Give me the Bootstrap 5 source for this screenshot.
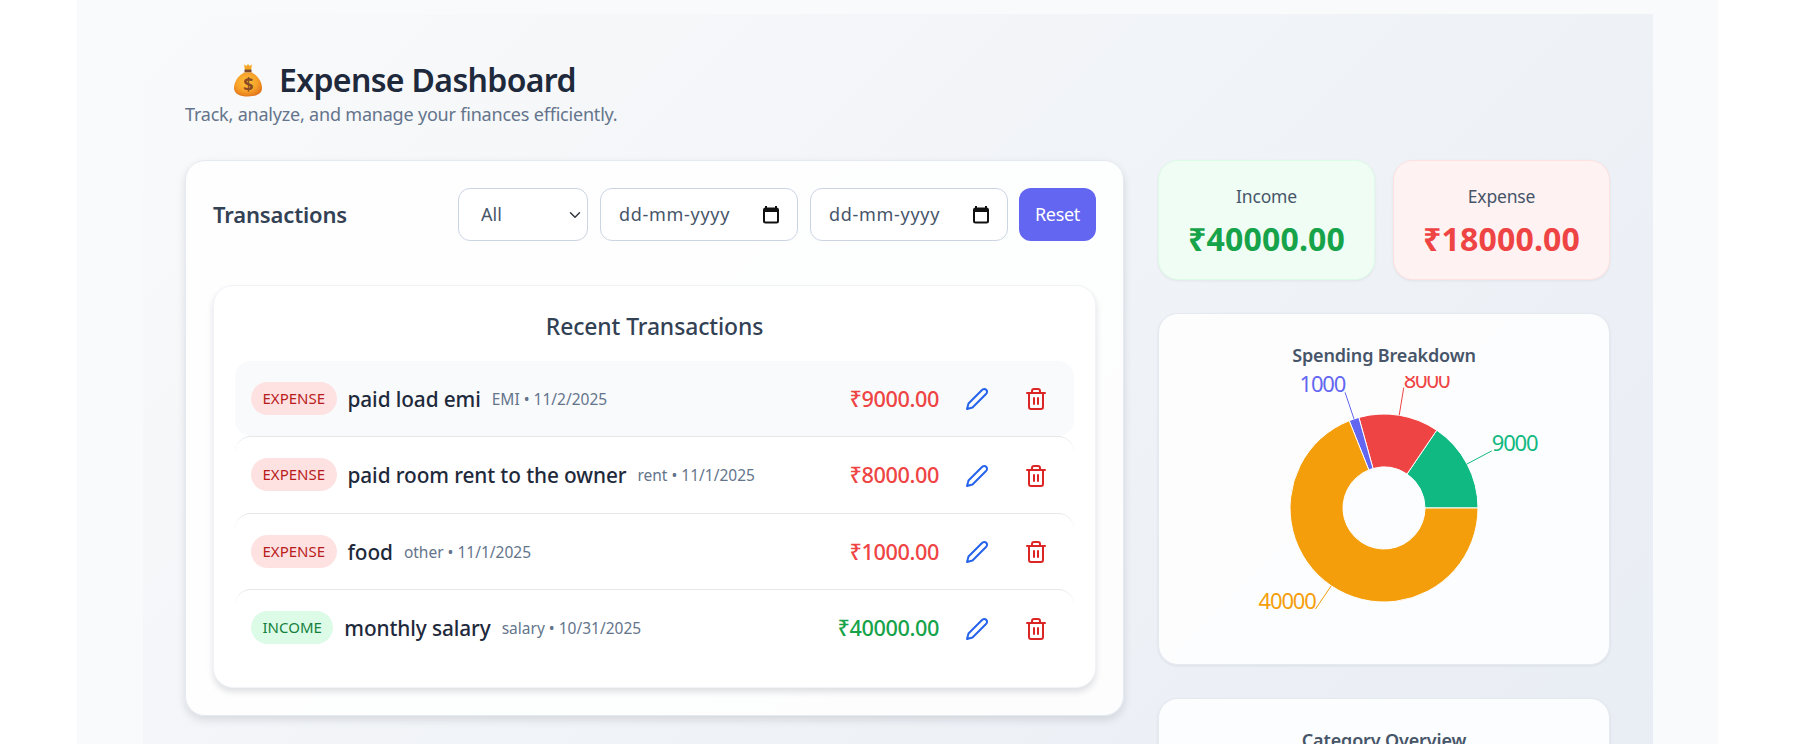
<!DOCTYPE html>
<html lang="en">
<head>
    <meta charset="UTF-8">
    <meta name="viewport" content="width=device-width, initial-scale=1.0">
    <title>Expense Dashboard</title>
    <link href="https://cdn.jsdelivr.net/npm/bootstrap@5.3.0/dist/css/bootstrap.min.css" rel="stylesheet">
    <style>
        html { overflow: hidden; }
        body {
            background-color: #ffffff;
            font-family: "Noto Sans", "Open Sans", sans-serif;
            color: #1e293b;
        }
        .page-outer {
            width: 1641px;
            margin: 0 0 0 77px;
            padding: 14px 65px 0 66px;
            background-color: #f9fafb;
        }
        .page-inner {
            padding: 43px 43px 40px 42px;
            background: linear-gradient(135deg, #f9fafb 0%, #e6ebf3 100%);
        }
        .dash-title {
            font-size: 32px;
            font-weight: 600;
            line-height: 45px;
            margin: 0 0 0 48px;
            letter-spacing: -0.65px;
            color: #1e293b;
        }
        .dash-sub {
            font-size: 18px;
            line-height: 24px;
            color: #64748b;
            margin: 0 0 34px 0;
            letter-spacing: -0.2px;
        }
        .bag-icon { width: 30px; height: 34px; }
        .dash-grid {
            display: grid;
            grid-template-columns: 939px 452px;
            gap: 34px;
            align-items: start;
        }
        .panel {
            background-color: rgba(255, 255, 255, 0.85);
            border: 1px solid #e5e9f0;
            border-radius: 20px;
        }
        .panel-main {
            padding: 27px;
            box-shadow: 0 4px 8px rgba(15, 23, 42, 0.12);
        }
        .panel-head { margin-bottom: 44px; height: 53px; }
        .panel-head h2 { font-size: 22px; font-weight: 600; color: #334155; margin: 0; letter-spacing: -0.15px; }
        .filter-wrap { gap: 12px; }
        .filter-select, .filter-date {
            height: 53px;
            margin: 0;
            background-color: #fff;
            border: 1px solid #cbd5e1;
            border-radius: 12px;
            font-size: 18px;
            color: #475569;
        }
        .filter-select {
            width: 130px;
            padding: 0 0 0 22px;
            background-position: right 4px center;
        }
        .filter-date {
            width: 198px;
            padding: 0 16px 0 18px;
        }
        .filter-date span { letter-spacing: .7px; }
        .reset-btn {
            width: 77px;
            height: 53px;
            margin-left: -1px;
            background-color: #6366f1;
            border: 0;
            border-radius: 12px;
            color: #fff;
            font-size: 18px;
            letter-spacing: -0.3px;
            padding: 0;
        }
        .list-box {
            background-color: #fff;
            border: 1px solid #f1f3f7;
            border-radius: 20px;
            padding: 27px 21px 21px;
            box-shadow: 0 4px 6px rgba(15, 23, 42, 0.13);
        }
        .list-box h3 {
            font-size: 22.9px;
            font-weight: 500;
            line-height: 28px;
            color: #334155;
            text-align: center;
            margin: 0 0 20px;
            letter-spacing: -0.1px;
        }
        .tx-row {
            height: 76.5px;
            padding: 0 14px 0 16px;
            border-top: 1px solid #e5e7eb;
            border-radius: 16px;
        }
        .tx-row:first-child { background-color: #f8fafc; border-top: 0; height: 75px; }
        .tx-pill {
            height: 33px;
            line-height: 33px;
            padding: 0 11.5px;
            border-radius: 17px;
            font-size: 15px;
        }
        .pill-exp { background-color: #fee2e2; color: #b91c1c; }
        .pill-inc { background-color: #dcfce7; color: #15803d; }
        .tx-name { font-size: 20.8px; font-weight: 500; color: #1e293b; letter-spacing: -0.1px; margin-left: 11px; padding-top: 2px; }
        .tx-meta { font-size: 15.5px; color: #64748b; margin-left: 11px; padding-top: 2px; }
        .tx-amount { font-size: 21.7px; font-weight: 500; letter-spacing: -0.4px; margin-right: 13.5px; padding-top: 2px; }
        .amt-exp { color: #ef4444; }
        .amt-inc { color: #16a34a; }
        .icon-btn {
            width: 48px;
            height: 44px;
            padding: 0;
            border: 0;
            background: transparent;
        }
        .icon-btn svg { width: 24px; height: 24px; fill: none; stroke-width: 2; stroke-linecap: round; stroke-linejoin: round; }
        .icon-edit svg { stroke: #2563eb; }
        .icon-del { margin-left: 11.5px; }
        .icon-del svg { stroke: #dc2626; }
        .side-col { display: flex; flex-direction: column; gap: 33px; }
        .stat-row { display: grid; grid-template-columns: 217px 217px; gap: 18px; }
        .stat-box {
            height: 120px;
            padding-top: 21px;
            text-align: center;
            border-radius: 20px;
            box-shadow: 0 1px 3px rgba(15, 23, 42, 0.06);
        }
        .stat-inc { background-color: #f0fdf4; border: 1px solid #dcfce7; }
        .stat-exp { background-color: #fef2f2; border: 1px solid #fee2e2; }
        .stat-label { font-size: 17.5px; line-height: 28px; color: #475569; letter-spacing: -0.2px; }
        .stat-value { font-size: 32px; line-height: 42px; font-weight: 700; margin-top: 8px; letter-spacing: 0.2px; }
        .chart-box {
            height: 352px;
            box-shadow: 0 1px 3px rgba(15, 23, 42, 0.08);
            padding-top: 27px;
        }
        .chart-box h4 {
            font-size: 18px;
            line-height: 28px;
            font-weight: 600;
            color: #475569;
            text-align: center;
            margin: 0;
            letter-spacing: -0.15px;
        }
        .donut { display: block; width: 450px; height: 280px; margin-top: 7px; overflow: hidden; }
        .donut text { font-size: 22px; font-weight: 400; letter-spacing: -1.2px; }
    </style>
</head>
<body>
    <div class="page-outer">
        <div class="page-inner">
            <h1 class="dash-title d-flex align-items-center gap-3">
                <svg class="bag-icon" viewBox="0 0 30 34" aria-hidden="true">
                    <defs>
                        <radialGradient id="bagFill" cx="45%" cy="40%" r="65%">
                            <stop offset="0" stop-color="#fdc43c"/>
                            <stop offset=".6" stop-color="#f7a028"/>
                            <stop offset="1" stop-color="#e0701a"/>
                        </radialGradient>
                    </defs>
                    <path d="M11 1.5l2.5 1.6L15 1l1.500 2.100L19 1.500 18 7h-6z" fill="#f5a623"/>
                    <path d="M11.500 6.500h7v3h-7z" fill="#7a4a2a"/>
                    <path d="M11 9.500C5 13 1 19 1 25c0 6 6 8.500 14 8.500S29 31 29 25c0-6-4-12-10-15.500z" fill="url(#bagFill)"/>
                    <text x="15" y="28" text-anchor="middle" font-size="18" font-weight="700" fill="#8a4a24">$</text>
                </svg>
                Expense Dashboard
            </h1>
            <p class="dash-sub">Track, analyze, and manage your finances efficiently.</p>

            <div class="dash-grid">
                <div class="panel panel-main">
                    <div class="panel-head d-flex justify-content-between align-items-center">
                        <h2>Transactions</h2>
                        <div class="d-flex filter-wrap">
                            <select class="form-select filter-select" aria-label="Type">
                                <option>All</option>
                                <option>Income</option>
                                <option>Expense</option>
                            </select>
                            <label class="filter-date d-flex align-items-center justify-content-between">
                                <span>dd-mm-yyyy</span>
                                <svg width="20" height="20" viewBox="0 0 20 20"><path d="M5 1v3M15 1v3" stroke="#111" stroke-width="2"/><rect x="3" y="3.500" width="14" height="14" rx="1.500" fill="none" stroke="#111" stroke-width="2"/><rect x="3" y="3.500" width="14" height="3.500" fill="#111"/></svg>
                            </label>
                            <label class="filter-date d-flex align-items-center justify-content-between">
                                <span>dd-mm-yyyy</span>
                                <svg width="20" height="20" viewBox="0 0 20 20"><path d="M5 1v3M15 1v3" stroke="#111" stroke-width="2"/><rect x="3" y="3.500" width="14" height="14" rx="1.500" fill="none" stroke="#111" stroke-width="2"/><rect x="3" y="3.500" width="14" height="3.500" fill="#111"/></svg>
                            </label>
                            <button class="btn reset-btn" type="button">Reset</button>
                        </div>
                    </div>

                    <div class="list-box">
                        <h3>Recent Transactions</h3>
                        <div id="txList"></div>
                    </div>
                </div>

                <div class="side-col">
                    <div class="stat-row">
                        <div class="stat-box stat-inc">
                            <div class="stat-label">Income</div>
                            <div class="stat-value amt-inc">₹40000.00</div>
                        </div>
                        <div class="stat-box stat-exp">
                            <div class="stat-label">Expense</div>
                            <div class="stat-value amt-exp">₹18000.00</div>
                        </div>
                    </div>
                    <div class="panel chart-box">
                        <h4>Spending Breakdown</h4>
                        <svg class="donut" id="donut" viewBox="0 0 450 280"></svg>
                    </div>
                    <div class="panel chart-box">
                        <h4>Category Overview</h4>
                    </div>
                </div>
            </div>
        </div>
    </div>

    <script src="https://cdn.jsdelivr.net/npm/bootstrap@5.3.0/dist/js/bootstrap.bundle.min.js"></script>
    <script>
        const transactions = [
            { type: 'expense', name: 'paid load emi', meta: 'EMI • 11/2/2025', amount: '₹9000.00' },
            { type: 'expense', name: 'paid room rent to the owner', meta: 'rent • 11/1/2025', amount: '₹8000.00' },
            { type: 'expense', name: 'food', meta: 'other • 11/1/2025', amount: '₹1000.00' },
            { type: 'income', name: 'monthly salary', meta: 'salary • 10/31/2025', amount: '₹40000.00' }
        ];

        // Zeilen der Liste
        document.getElementById('txList').innerHTML = transactions.map(t => {
            const exp = t.type === 'expense';
            return `<div class="tx-row d-flex align-items-center">
                <span class="tx-pill ${exp ? 'pill-exp' : 'pill-inc'}">${t.type.toUpperCase()}</span>
                <span class="tx-name">${t.name}</span>
                <span class="tx-meta">${t.meta}</span>
                <span class="tx-amount ms-auto ${exp ? 'amt-exp' : 'amt-inc'}">${t.amount}</span>
                <button class="icon-btn icon-edit" type="button" aria-label="Edit"><svg viewBox="0 0 24 24"><path d="M17 3a2.850 2.830 0 1 1 4 4L7.500 20.500 2 22l1.500-5.500Z"/></svg></button>
                <button class="icon-btn icon-del" type="button" aria-label="Delete"><svg viewBox="0 0 24 24"><path d="M3 6h18"/><path d="M19 6v14c0 1-1 2-2 2H7c-1 0-2-1-2-2V6"/><path d="M8 6V4c0-1 1-2 2-2h4c1 0 2 1 2 2v2"/><path d="M10 11v6"/><path d="M14 11v6"/></svg></button>
            </div>`;
        }).join('');

        // Donut
        const slices = [
            { value: 9000, color: '#10b981' },
            { value: 8000, color: '#ef4444' },
            { value: 1000, color: '#6366f1' },
            { value: 40000, color: '#f59e0b' }
        ];
        const total = slices.reduce((s, d) => s + d.value, 0);
        const cx = 225, cy = 132, outer = 94, inner = 41, labelR = 122;
        const pt = (r, a) => [cx + r * Math.cos(a), cy - r * Math.sin(a)].map(n => n.toFixed(2)).join(' ');
        let start = 0, svg = '';
        slices.forEach(d => {
            const sweep = d.value / total * 2 * Math.PI;
            const end = start + sweep, mid = start + sweep / 2;
            const large = sweep > Math.PI ? 1 : 0;
            svg += `<path d="M${pt(outer, start)} A${outer} ${outer} 0 ${large} 0 ${pt(outer, end)} L${pt(inner, end)} A${inner} ${inner} 0 ${large} 1 ${pt(inner, start)} Z" fill="${d.color}" stroke="#fff" stroke-width="1"/>`;
            svg += `<path d="M${pt(outer, mid)} L${pt(labelR, mid)}" stroke="${d.color}" fill="none"/>`;
            const lp = pt(labelR, mid).split(' ');
            svg += `<text x="${lp[0]}" y="${lp[1]}" fill="${d.color}" text-anchor="${Math.cos(mid) > 0 ? 'start' : 'end'}">${d.value}</text>`;
            start = end;
        });
        document.getElementById('donut').innerHTML = svg;
    </script>
</body>
</html>
